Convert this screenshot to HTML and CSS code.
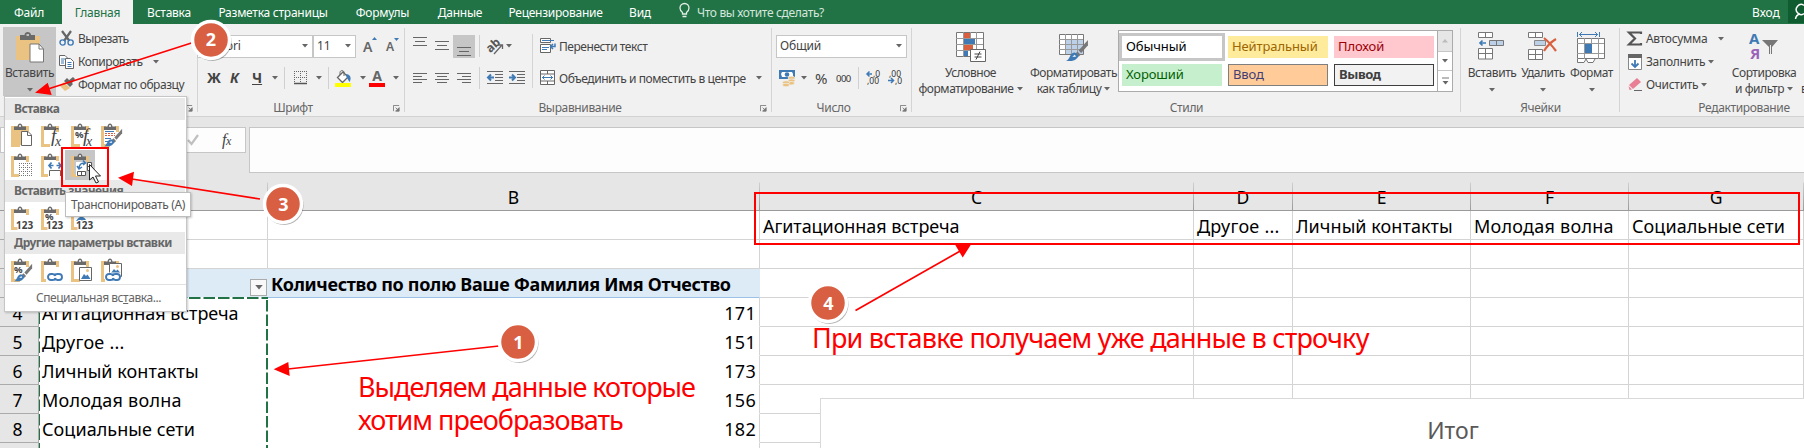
FILE: index.html
```html
<!DOCTYPE html>
<html lang="ru">
<head>
<meta charset="utf-8">
<title>Excel</title>
<link rel="stylesheet" href="styles.css">
</head>
<body>
<svg class="defs" width="0" height="0">
  <symbol id="clip" viewBox="0 0 22 25"><path d="M1.5 4.5H5M14 4.500H17.500M1.500 3V22.500H9" fill="none" stroke="#eac282" stroke-width="3"/><path d="M16.500 3V9" stroke="#eac282" stroke-width="3"/><path d="M3 7V3.500H6.500C7 -.5 11 -.5 11.500 3.500H15V7Z" fill="#6a6a6a"/><path d="M8 3H10" stroke="#fff" stroke-width="1.600"/></symbol>
  <symbol id="launch" viewBox="0 0 8 8"><path d="M.5 7V.5H7" fill="none" stroke="#777"/><path d="M3 3L6 6M7 3V7H3Z" stroke="#777" fill="#777"/></symbol>
  <symbol id="arr" viewBox="0 0 6 4"><path d="M0 0H6L3 3.500Z" fill="#666"/></symbol>
  <symbol id="chain" viewBox="0 0 16 8"><path d="M9.500 5.500C8.500 7 7 7 5.500 7H4C0 7 0 1 4 1H5.500C7 1 8 1.500 8.500 3M6.500 2.500C7.500 1 9 1 10.500 1H12C16 1 16 7 12 7H10.500C9 7 8 6.500 7.500 5" fill="none" stroke="#3f7ab5" stroke-width="1.900"/></symbol>
  <symbol id="brush" viewBox="0 0 22 22"><path d="M21 1L12 11L14.500 13.500L21 6Z" fill="#777"/><path d="M11 12L14 15L12 17L9 14Z" fill="#777"/><path d="M0 21C4 20 3 14 8 13C12 14 13 17 10 19C7 22 3 21 0 21Z" fill="#3f7ab5"/><path d="M6 17L8.500 15L9.500 17Z" fill="#fff"/></symbol>
</svg>

<nav class="tabs">
  <span class="tab file">Файл</span><span class="tab active">Главная</span><span class="tab">Вставка</span><span class="tab">Разметка страницы</span><span class="tab">Формулы</span><span class="tab">Данные</span><span class="tab">Рецензирование</span><span class="tab">Вид</span>
  <svg class="bulb" width="12" height="16"><path d="M3.500 11V9.500C1.500 8 1 6.500 1 5A4.500 4.500 0 0 1 10 5C10 6.500 9.500 8 7.500 9.500V11ZM3.500 13.500H7.500" fill="none" stroke="#e2eee7" stroke-width="1.300"/></svg>
  <span class="ask">Что вы хотите сделать?</span>
  <span class="login">Вход</span>
  <span class="share"><svg width="16" height="23"><path d="M16 5.300A5 5 0 1 0 16 13.700" fill="none" stroke="#fff" stroke-width="1.500"/><path d="M7.500 19C8 15.500 9.500 14.500 12 14" fill="none" stroke="#fff" stroke-width="1.500"/></svg></span>
</nav>

<main class="ribbon">
  <section class="group clipboard">
    <div class="paste">
      <svg width="30" height="32"><path d="M1 4H25V28H1Z" fill="#eac282"/><path d="M5 8V3H9.500C9.500 -1 16 -1 16 3H20V8Z" fill="#6a6a6a"/><path d="M11.500 3H14" stroke="#ddd" stroke-width="1.500"/><path d="M15 12H24L28.500 17V30H15Z" fill="#fff" stroke="#777"/><path d="M24 12V17H28.500" fill="none" stroke="#777"/></svg>
      <span>Вставить</span><svg class="arr"><use href="#arr"/></svg>
    </div>
    <div class="clipcol">
      <div class="cmd"><svg width="16" height="17"><path d="M3 1L10.500 11M12 1L5 11" stroke="#666" stroke-width="2.200"/><circle cx="3.600" cy="12.500" r="2.600" fill="none" stroke="#3f7ab5" stroke-width="1.400"/><circle cx="11.600" cy="12.500" r="2.600" fill="none" stroke="#3f7ab5" stroke-width="1.400"/></svg><span class="t cut">Вырезать</span></div>
      <div class="cmd"><svg width="16" height="16"><g fill="#fff" stroke="#666"><path d="M.5 1.500H6L8.500 4V11.500H.5Z"/><path d="M6.500 4.500H11.500L14.500 7.500V14.500H6.500Z"/></g><path d="M2 5H6M2 7H5M2 9H5M8.500 8.500H12.500M8.500 10.500H12.500M8.500 12.500H12.500" stroke="#3f7ab5"/></svg><span class="t copy">Копировать</span><svg class="arr"><use href="#arr"/></svg></div>
      <div class="cmd"><svg width="16" height="16"><path d="M1 9L5 5L11 11L6 14Z" fill="#eac282"/><path d="M5 4L8 1L14 7L11 10ZM9 4L14 0L16 2L13 6Z" fill="#666"/></svg><span class="t fmt">Формат по образцу</span></div>
    </div>
    <svg class="launch"><use href="#launch"/></svg>
  </section>

  <section class="group font">
    <div class="row r1">
      <span class="box">Calibri<svg class="arr"><use href="#arr"/></svg></span><span class="box size">11<svg class="arr"><use href="#arr"/></svg></span>
      <span class="grow">A<svg width="5" height="4"><path d="M0 3L2.500 0L5 3Z" fill="#3f7ab5"/></svg></span><span class="grow small">A<svg width="5" height="4"><path d="M0 0H5L2.500 3Z" fill="#3f7ab5"/></svg></span>
    </div>
    <div class="row r2">
      <b>Ж</b><b class="it">К</b><b class="un">Ч</b><svg class="arr"><use href="#arr"/></svg><i class="sep"></i>
      <svg width="14" height="14"><path d="M.5 0V12M6.500 0V12M12.500 0V12M0 .5H13M0 6.500H13" stroke="#666" stroke-dasharray="1 1"/><path d="M0 12.500H13" stroke="#555" stroke-width="1.500"/></svg><svg class="arr"><use href="#arr"/></svg><i class="sep"></i>
      <svg width="17" height="17"><path d="M2.500 7.500L8 2L13 7L7.500 12.500Z" fill="#fff" stroke="#666" stroke-width="1.300"/><path d="M5 5V2.500C5 0 9 0 9 2.500V6" fill="none" stroke="#666"/><path d="M11 4C15 4 17 8 14.500 12L12 8Z" fill="#3f7ab5"/><path d="M0 13H16V17H0Z" fill="#ff0"/></svg><svg class="arr"><use href="#arr"/></svg>
      <span class="acolor">A</span><svg class="arr"><use href="#arr"/></svg>
    </div>
    <span class="label">Шрифт</span><svg class="launch"><use href="#launch"/></svg>
  </section>

  <section class="group align">
    <div class="alcol">
      <div class="row r1">
        <svg width="14" height="10"><path d="M0 1.500H14M2 5.500H12M0 9.500H14" transform="translate(0 -1)" stroke="#666"/></svg>
        <svg width="14" height="10"><path d="M0 1.500H14M2 5.500H12M0 9.500H14" transform="translate(0 -1)" stroke="#666"/></svg>
        <span class="sel"><svg width="14" height="10"><path d="M0 1.500H14M2 5.500H12M0 9.500H14" transform="translate(0 -1)" stroke="#666"/></svg></span>
        <i class="sep"></i>
        <svg width="18" height="17"><g transform="rotate(-42 7 9)"><text x="0" y="11" class="ab">ab</text></g><path d="M7 16L15 7M11 7H15.500V11" fill="none" stroke="#666" stroke-width="1.300"/></svg><svg class="arr"><use href="#arr"/></svg>
      </div>
      <div class="row r2">
        <svg width="14" height="11"><path d="M0 .5H14M0 3.500H9M0 6.500H14M0 9.500H9" stroke="#666"/></svg>
        <svg width="14" height="11"><path d="M0 .5H14M2 3.500H12M0 6.500H14M2 9.500H12" stroke="#666"/></svg>
        <svg width="14" height="11"><path d="M0 .5H14M5 3.500H14M0 6.500H14M5 9.500H14" stroke="#666"/></svg>
        <i class="sep"></i>
        <svg width="17" height="14"><path d="M0 .5H16M8 3.500H16M8 6.500H16M8 9.500H16M0 12.500H16" stroke="#666"/><path d="M7 6.500H1M4 3.500L1 6.500L4 9.500" fill="none" stroke="#3f7ab5" stroke-width="2"/></svg>
        <svg width="17" height="14"><path d="M0 .5H16M8 3.500H16M8 6.500H16M8 9.500H16M0 12.500H16" stroke="#666"/><path d="M0 6.500H6M3 3.500L6 6.500L3 9.500" fill="none" stroke="#3f7ab5" stroke-width="2"/></svg>
      </div>
    </div>
    <div class="wrapcol">
      <div class="row r1"><svg width="17" height="16"><path d="M.5 .5H10.500V4.500H.5ZM.5 6.500H10.500V14.500H.5Z" fill="#fff" stroke="#666"/><path d="M2 2.500H14M2 9.500H9M2 11.500H7" stroke="#3f7ab5"/><path d="M15 5.500V8.500H11M13 6L10.500 8.500L13 11" fill="none" stroke="#3f7ab5" stroke-width="1.500"/></svg><span class="t wrap">Перенести текст</span></div>
      <div class="row r2"><svg width="17" height="16"><path d="M.5 .5H14.500V14.500H.5Z" fill="#fff" stroke="#666"/><path d="M.5 4H14.500M.5 11H14.500M7.500 0V4M7.500 11V15" stroke="#666"/><path d="M2 7.500H13M4.500 5.500L2.500 7.500L4.500 9.500M10.500 5.500L12.500 7.500L10.500 9.500" fill="none" stroke="#3f7ab5"/></svg><span class="t merge">Объединить и поместить в центре</span><svg class="arr"><use href="#arr"/></svg></div>
    </div>
    <span class="label">Выравнивание</span><svg class="launch"><use href="#launch"/></svg>
  </section>

  <section class="group number">
    <div class="row r1"><span class="box">Общий<svg class="arr"><use href="#arr"/></svg></span></div>
    <div class="row r2">
      <svg width="17" height="17"><path d="M0 0H16V9H0Z" fill="#3f7ab5"/><path d="M3 2H13L14 4V7H3L2 4Z" fill="#fff"/><circle cx="8" cy="4.500" r="2.300" fill="#3f7ab5"/><g fill="#eac282" stroke="#f0f0f0" stroke-width=".7"><ellipse cx="12.500" cy="8" rx="3.500" ry="1.800"/><ellipse cx="12.500" cy="10.700" rx="3.500" ry="1.800"/><ellipse cx="12" cy="13.200" rx="3.500" ry="1.800"/><ellipse cx="7" cy="12.500" rx="3.500" ry="1.800"/><ellipse cx="7" cy="15" rx="3.500" ry="1.800"/></g></svg><svg class="arr"><use href="#arr"/></svg>
      <span class="pct">%</span><span class="ooo">000</span><i class="sep"></i>
      <svg width="16" height="16" class="dec"><text x="7" y="6.500">,0</text><text x="1" y="14">,00</text><path d="M6 4H1M3.500 1.500L1 4L3.500 6.500" fill="none" stroke="#3f7ab5" stroke-width="1.500"/></svg>
      <svg width="16" height="16" class="dec"><text x="1" y="6.500">,00</text><text x="7" y="14">,0</text><path d="M0 10.500H5.500M3 8L5.500 10.500L3 13" fill="none" stroke="#3f7ab5" stroke-width="1.500"/></svg>
    </div>
    <span class="label">Число</span><svg class="launch"><use href="#launch"/></svg>
  </section>

  <section class="group styles">
    <div class="big cond">
      <svg width="30" height="30"><path d="M.5 .5H27.500V24.500H.5Z" fill="#fff" stroke="#777"/><path d="M8 1H14V6H8ZM8 13H17V18H8Z" fill="#d9603f"/><path d="M8 7H19V12H8ZM8 19H12V24H8Z" fill="#3f7ab5"/><path d="M7.500 0V25M14.500 0V6M20.500 0V25M0 6.500H27M0 12.500H27M0 18.500H27" stroke="#999" fill="none"/><path d="M14.500 17.500H29.500V29.500H14.500Z" fill="#fff" stroke="#666"/><path d="M18.500 22H25.500M18.500 25H25.500M24 19.500L20 27.500" stroke="#444"/></svg>
      <span class="t c1">Условное</span><span class="t c2">форматирование<svg class="arr"><use href="#arr"/></svg></span>
    </div>
    <div class="big ftab">
      <svg width="30" height="30"><path d="M.5 2.500H24.500V22.500H.5Z" fill="#fff" stroke="#777"/><path d="M6 8H24V22H6Z" fill="#bcd0e8"/><path d="M6.500 2V22M12.500 2V22M18.500 2V22M0 7.500H24M0 12.500H24M0 17.500H24" stroke="#999"/><use href="#brush" x="7" y="7" width="23" height="23"/></svg>
      <span class="t c3">Форматировать</span><span class="t c4">как таблицу<svg class="arr"><use href="#arr"/></svg></span>
    </div>
    <div class="gallery">
      <div class="swatches">
        <span class="sw normal">Обычный</span><span class="sw neutral">Нейтральный</span><span class="sw bad">Плохой</span>
        <span class="sw good">Хороший</span><span class="sw input">Ввод</span><span class="sw output">Вывод</span>
      </div>
      <div class="scroller"><span class="off"><svg width="6" height="4"><path d="M0 3.500H6L3 0Z" fill="#bbb"/></svg></span><span><svg class="arr"><use href="#arr"/></svg></span><span><svg width="7" height="8"><path d="M0 1H7" stroke="#777"/><path d="M.5 4H6.500L3.500 7.500Z" fill="#666"/></svg></span></div>
    </div>
    <span class="label">Стили</span>
  </section>

  <section class="group cells">
    <div class="big"><svg width="28" height="30"><path d="M.5 .5H14.500V5.500H.5ZM7.500 .5V5.500M.5 16.500H14.500V27H.5ZM.5 21.500H14.500M7.500 16.500V27" fill="#fff" stroke="#777"/><path d="M11.500 8.500H25.500V13.500H11.500ZM18.500 8.500V13.500" fill="#bcd0e8" stroke="#777"/><path d="M8 11H2M4.500 8.500L2 11L4.500 13.500" fill="none" stroke="#3f7ab5" stroke-width="1.700"/></svg><span class="t ins">Вставить</span><svg class="arr"><use href="#arr"/></svg></div>
    <div class="big"><svg width="30" height="30"><path d="M.5 .5H14.500V5.500H.5ZM7.500 .5V5.500M.5 17.500H14.500V27.500H.5ZM.5 22.500H14.500M7.500 17.500V27.500" fill="#fff" stroke="#777"/><path d="M6.500 8.500H17.500V13.500H6.500Z" fill="#bcd0e8" stroke="#888"/><path d="M16 6C21 10 25 15 28 19M28 7C23 10 19 14 16 19" fill="none" stroke="#d9603f" stroke-width="2.200"/></svg><span class="t del">Удалить</span><svg class="arr"><use href="#arr"/></svg></div>
    <div class="big"><svg width="29" height="31"><path d="M.5 6.500H27.500V26.500H.5Z" fill="#fff" stroke="#777"/><path d="M7.500 6V27M14.500 6V12M21.500 6V27M0 11.500H27M0 21.500H27" stroke="#999"/><path d="M8 12H15V21H8Z" fill="#3f7ab5"/><path d="M.5 0V5M22.500 0V5M2 2.500H21M5 0L2.500 2.500L5 5M18 0L20.500 2.500L18 5" fill="none" stroke="#3f7ab5"/><path d="M.5 27V30.500H7L9 27L11 30.500H16L18 27" fill="#fff" stroke="#777"/></svg><span class="t for">Формат</span><svg class="arr"><use href="#arr"/></svg></div>
    <span class="label">Ячейки</span>
  </section>

  <section class="group editing">
    <div class="clipcol">
      <div class="cmd"><svg width="16" height="16"><path d="M14 3V1.500H2L8 7.500L2 13.500H14V12" fill="none" stroke="#555" stroke-width="2.200"/></svg><span class="t sum">Автосумма</span><svg class="arr a1"><use href="#arr"/></svg></div>
      <div class="cmd"><svg width="16" height="16"><path d="M1.500 1.500H14.500V15.500H1.500Z" fill="#fff" stroke="#888"/><path d="M1 0H15V4H1Z" fill="#666"/><path d="M8 6V13M4.500 9.500L8 13L11.500 9.500" fill="none" stroke="#3f7ab5" stroke-width="1.800"/></svg><span class="t fil">Заполнить</span><svg class="arr a2"><use href="#arr"/></svg></div>
      <div class="cmd"><svg width="16" height="16"><path d="M2 8L10 1L14 5L6 12Z" fill="#e97f94"/><path d="M1.500 9L5 12.500L2.500 13Z" fill="#e97f94"/><path d="M7 13.500H15" stroke="#666"/></svg><span class="t clr">Очистить</span><svg class="arr a3"><use href="#arr"/></svg></div>
    </div>
    <div class="big sort"><svg width="30" height="30"><text x="0" y="12" class="sa">А</text><text x="1" y="27" class="sb">Я</text><path d="M13 8H29L23 15V22H20V15Z" fill="#777"/><path d="M21.500 13V22" stroke="#eee"/></svg><span class="t c5">Сортировка</span><span class="t c6">и фильтр<svg class="arr"><use href="#arr"/></svg></span></div>
    <span class="vcut">в</span>
    <span class="label">Редактирование</span>
  </section>
</main>

<div class="formula">
  <div class="fxbox"><svg width="12" height="12"><path d="M1 6L4.500 10L11 1" fill="none" stroke="#c0c0c0" stroke-width="2.200"/></svg><i class="fx">f<small>x</small></i></div>
  <div class="fin"></div>
</div>

<div class="sheet">
  <div class="line head"><span class="rh"></span><span></span><span>B</span><span>C</span><span>D</span><span>E</span><span>F</span><span>G</span></div>
  <div class="line"><span class="rh"></span><span></span><span></span><span class="w1"><em>Агитационная встреча</em></span><span class="w2"><em>Другое ...</em></span><span class="w3"><em>Личный контакты</em></span><span class="w4"><em>Молодая волна</em></span><span class="w5"><em>Социальные сети</em></span></div>
  <div class="line"><span class="rh"></span><span></span><span></span><span></span><span></span><span></span><span></span><span></span></div>
  <div class="line pivot"><span class="rh"></span><span class="flt"><i><svg class="arr big6"><use href="#arr"/></svg></i></span><span class="ph"><em>Количество по полю Ваше Фамилия Имя Отчество</em></span><span></span><span></span><span></span><span></span><span></span></div>
  <div class="line data"><span class="rh">4</span><span class="w1"><em>Агитационная встреча</em></span><span class="n">171</span><span></span><span></span><span></span><span></span><span></span></div>
  <div class="line data"><span class="rh">5</span><span class="w2"><em>Другое ...</em></span><span class="n">151</span><span></span><span></span><span></span><span></span><span></span></div>
  <div class="line data"><span class="rh">6</span><span class="w3"><em>Личный контакты</em></span><span class="n">173</span><span></span><span></span><span></span><span></span><span></span></div>
  <div class="line data"><span class="rh">7</span><span class="w4"><em>Молодая волна</em></span><span class="n">156</span><span></span><span></span><span></span><span></span><span></span></div>
  <div class="line data"><span class="rh">8</span><span class="w5"><em>Социальные сети</em></span><span class="n">182</span><span></span><span></span><span></span><span></span><span></span></div>
  <div class="line data tail"><span class="rh"></span><span></span><span></span><span></span><span></span><span></span><span></span><span></span></div>
</div>

<div class="chart"><span>Итог</span></div>

<svg class="over ants" width="1804" height="448"><path d="M188 298H268" stroke="#fff" stroke-width="2"/><path d="M189 298H268M267 300V448" stroke="#217346" stroke-width="2" stroke-dasharray="11.500 3"/><path d="M39.500 298V448" stroke="#217346" stroke-dasharray="11.500 3"/></svg>

<div class="menu">
  <div class="mh m1">Вставка</div>
  <div class="icons">
    <svg width="22" height="25"><path d="M0 3H18V22H0Z" fill="#eac282"/><use href="#clip" width="22" height="25"/><path d="M10.500 8.500H17L20.500 12V22.500H10.500Z" fill="#fff" stroke="#666"/><path d="M16.500 8.500V12.500H20.500" fill="none" stroke="#666"/></svg>
    <svg width="22" height="25"><use href="#clip" width="22" height="25"/><text x="10" y="19" class="fi">f</text><text x="14" y="23" class="fi s">x</text></svg>
    <svg width="22" height="25"><use href="#clip" width="22" height="25"/><text x="4" y="15" class="pc">%</text><text x="12" y="19" class="fi">f</text><text x="15" y="23" class="fi s">x</text></svg>
    <svg width="22" height="25"><use href="#clip" width="22" height="25"/><path d="M4 10.500H14M4 12.500H14" stroke="#d9603f" stroke-dasharray="2 1"/><path d="M4 8.500H13M4 15.500H10M4 18.500H8" stroke="#3f7ab5"/><use href="#brush" x="3" y="5" width="19" height="19"/></svg>
  </div>
  <div class="icons">
    <svg width="22" height="25"><use href="#clip" width="22" height="25"/><path d="M8 10H21V24H8Z" fill="#fff"/><path d="M8.500 10V23M12.500 10V23M16.500 10V23M20.500 10V23M8 10.500H21M8 14.500H21M8 18.500H21M8 22.500H21" stroke="#777" stroke-dasharray="1 1"/></svg>
    <svg width="22" height="25"><use href="#clip" width="22" height="25"/><path d="M7 8H22V25H7Z" fill="#fff"/><path d="M12.500 12.500H8M10.500 9.500L8 12.500L10.500 15.500M15.500 12.500H20M17.500 9.500L20 12.500L17.500 15.500" fill="none" stroke="#3f7ab5" stroke-width="1.700"/><path d="M8.500 23V17.500H19.500V23" fill="none" stroke="#666"/></svg>
    <span class="hot"><svg width="22" height="25"><use href="#clip" width="22" height="25"/><path d="M5 9H15V23H5Z" fill="#fff"/><path d="M6.500 18.500H14.500V22.500H6.500ZM10.500 18.500V22.500M16.500 9.500H20.500V17.500H16.500ZM16.500 13.500H20.500" fill="#fff" stroke="#555"/><path d="M8 16C8 12 10 9.500 14 10M6 13L8 16L11 14M12 7.500L14.500 10L12 12" fill="none" stroke="#3f7ab5" stroke-width="1.500"/></svg></span>
  </div>
  <div class="mh m2">Вставить значения</div>
  <div class="icons third">
    <svg width="22" height="25"><use href="#clip" width="22" height="25"/><text x="5" y="23" class="nm">123</text></svg>
    <svg width="22" height="25"><use href="#clip" width="22" height="25"/><text x="4" y="14" class="pc">%</text><text x="5" y="23" class="nm">123</text></svg>
    <svg width="22" height="25"><use href="#clip" width="22" height="25"/><path d="M5 15C8 10 12 9 15 14Z" fill="#3f7ab5"/><text x="5" y="23" class="nm">123</text></svg>
  </div>
  <div class="mh m3">Другие параметры вставки</div>
  <div class="icons fourth">
    <svg width="22" height="25"><use href="#clip" width="22" height="25"/><text x="3" y="15" class="pc">%</text><use href="#brush" x="3" y="5" width="19" height="19"/></svg>
    <svg width="22" height="25"><use href="#clip" width="22" height="25"/><path d="M5 14H22V25H5Z" fill="#fff"/><use href="#chain" x="6" y="15" width="16" height="8"/></svg>
    <svg width="22" height="25"><use href="#clip" width="22" height="25"/><path d="M8.500 9.500H20.500V22.500H8.500Z" fill="#fff" stroke="#666"/><path d="M10 21L13 16L15 18L16.500 16.500L19.500 21Z" fill="#3f7ab5"/><circle cx="16.500" cy="12.500" r="1.500" fill="#eac282"/></svg>
    <svg width="22" height="25"><use href="#clip" width="22" height="25"/><path d="M8.500 5.500H20.500V18.500H8.500Z" fill="#fff" stroke="#666"/><path d="M10 15L13 11L15 13L16.500 11.500L19.500 15Z" fill="#3f7ab5"/><circle cx="16.500" cy="8.500" r="1.500" fill="#eac282"/><path d="M4 14.500H19V24H4Z" fill="#fff"/><use href="#chain" x="4" y="15" width="16" height="8"/></svg>
  </div>
  <div class="special">Специальная вс<u>т</u>авка...</div>
</div>
<div class="tip">Транспонировать (A)</div>

<svg class="over" width="1804" height="448">
  <g fill="none" stroke="#f00" stroke-width="2"><path d="M62 148H108V186H62Z"/><path d="M755 193H1799V244H755Z"/></g>
  <path d="M89.500 164.500V180L93 177L96 183L98.500 182L95.500 176H100.500Z" fill="#fff" stroke="#222"/>
  <g stroke="#f00" stroke-width="1.700"><path d="M48 89L193 42.500M132 179L260 199M288 369L499 346M962 250L855.500 310.500"/></g>
  <path d="M35 92.700L47.700 82.700L51.700 95ZM118 177.700L134 171.700L132 186ZM273.700 369.300L288.300 362L289.700 376ZM955 244.500H971L962.700 257.500Z" fill="#f00"/>
  <g class="badge"><circle cx="212" cy="41.500" r="19.500" class="sh"/><circle cx="211" cy="40" r="18.500"/><text x="211" y="46">2</text></g>
  <g class="badge"><circle cx="284" cy="205.500" r="19.500" class="sh"/><circle cx="283" cy="204" r="18.500"/><text x="283.500" y="210.500">3</text></g>
  <g class="badge"><circle cx="519" cy="343.500" r="19.500" class="sh"/><circle cx="518" cy="342" r="18.500"/><text x="518.500" y="348.500">1</text></g>
  <g class="badge"><circle cx="829" cy="304.500" r="19.500" class="sh"/><circle cx="828" cy="303" r="18.500"/><text x="828.500" y="309.500">4</text></g>
</svg>
<div class="note one">Выделяем данные которые<br>хотим преобразовать</div>
<div class="note two">При вставке получаем уже данные в строчку</div>
</body>
</html>
```
FILE: styles.css
```css
* { box-sizing: border-box; }
html { overflow: hidden; height: 448px; }
body { margin: 0; width: 1804px; height: 448px; overflow: hidden; position: relative; background: #fff; color: #444; font: 12px/16px "Noto Sans", "Open Sans", sans-serif; white-space: nowrap; }
svg { display: block; flex: none; overflow: visible; }
.defs { position: absolute; }
.arr { width: 6px; height: 4px; }
.big6 { width: 8px; height: 5px; }
em { font-style: normal; }

.tabs { display: grid; grid-template-columns: 62px 71px 72px 136px 83px 72px 119px 50px 14px 18px 1055px 36px 16px; height: 24px; background: #217346; color: #fff; }
.tab { text-align: center; line-height: 25px; letter-spacing: -.25px; }
.tab.file { text-align: left; padding-left: 14px; line-height: 26px; }
.tab.active { background: #f1f1f1; color: #217346; }
.bulb { grid-column: 10; margin-top: 3px; }
.ask { color: #d5e6dc; line-height: 25px; letter-spacing: -.35px; }
.login { line-height: 25px; }
.share { background: #0e5c2f; height: 23px; overflow: hidden; }

.ribbon { display: flex; height: 93px; background: #f1f1f1; border-bottom: 1px solid #d2d2d2; }
.group { position: relative; height: 92px; flex: none; display: flex; }
.group::after { content: ""; position: absolute; right: 0; top: 4px; width: 1px; height: 84px; background: #d4d4d4; }
.label { position: absolute; left: 0; right: 0; bottom: 0; text-align: center; color: #666; line-height: 16px; letter-spacing: -.35px; }
.font .label, .align .label, .number .label { right: 17px; }
.launch { position: absolute; right: 5px; bottom: 4px; width: 7px; height: 7px; }
.clipboard { width: 198px; }
.font { width: 207px; flex-direction: column; }
.align { width: 367px; }
.number { width: 140px; flex-direction: column; }
.styles { width: 549px; }
.cells { width: 159px; }
.editing { width: 184px; }
.editing::after { display: none; }

.paste { width: 53px; height: 69px; margin: 3px 0 0 3px; background: #c6c6c6; display: flex; flex-direction: column; align-items: center; padding-top: 5px; }
.paste span { margin-top: 1px; letter-spacing: -.4px; }
.paste .arr { margin-top: 7px; }
.clipcol { display: flex; flex-direction: column; padding: 3px 0 0 3px; }
.cmd { display: flex; align-items: center; height: 23px; gap: 3px; }
.cmd .arr { margin-left: 8px; }
.t { display: flex; align-items: center; gap: 3px; letter-spacing: -.45px; }
.t.cut { letter-spacing: -.6px; }
.editing .cmd .t { letter-spacing: -.3px; }

.row { display: grid; align-items: center; justify-items: start; }
.r1 { height: 24px; margin-top: 10px; }
.r2 { height: 24px; margin-top: 8px; }
.box { background: #fff; border: 1px solid #c6c6c6; height: 23px; width: 100%; display: flex; align-items: center; justify-content: space-between; padding: 0 4px 0 3px; letter-spacing: -.2px; }
.font .r1 { grid-template-columns: 116px 43px 7px 23px 20px; margin-left: -1px; }
.font .r1 .box:first-child { padding-left: 8px; }
.grow { grid-column: 4; font: 600 14px "Noto Sans"; display: flex; color: #666; }
.grow.small { grid-column: 5; font-size: 12px; }
.font .r2 { grid-template-columns: 23px 22px 20px 12px 10px 22px 12px 7px 25px 9px 24px 10px; margin-left: 9px; }
.font b { font-size: 14px; }
.it { font-style: italic; }
.un { text-decoration: underline; }
.sep { width: 1px; height: 22px; background: #d0d0d0; }
.acolor { font: bold 14px/14px "Noto Sans"; width: 16px; text-align: center; border-bottom: 4px solid #f00; color: #666; }

.alcol { width: 128px; border-right: 1px solid #d4d4d4; margin: 10px 0 0; height: 54px; padding-left: 8px; }
.alcol .r1, .wrapcol .r1 { margin-top: 0; }
.alcol .r1 { grid-template-columns: 22px 18px 26px 8px 19px 10px; }
.alcol .r1 > svg:first-child { margin-top: -8px; }
.sel { background: #c6c6c6; width: 22px; height: 23px; padding: 12px 0 0 4px; }
.alcol .r2 { grid-template-columns: 22px 22px 22px 8px 22px 17px; }
.wrapcol { padding: 10px 0 0 7px; }
.wrapcol .row { grid-template-columns: 19px 197px 8px; }
.wrap, .merge { padding-top: 1px; }
.ab { font: bold 12px "Noto Sans"; fill: #555; }

.number .r1 { margin-left: 4px; grid-template-columns: 131px; }
.number .r2 { margin-left: 7px; grid-template-columns: 22px 14px 21px 22px 8px 22px 16px; }
.pct { font-size: 15px; }
.ooo { font: 9.500px "Noto Sans"; letter-spacing: -.5px; color: #333; }
.dec text { font: 8.500px "Noto Sans"; fill: #333; }

.big { display: flex; flex-direction: column; align-items: center; padding-top: 8px; }
.big > svg:first-child { height: 30px; margin-bottom: 3px; }
.big > .arr { margin-top: 7px; }
.cond { width: 117px; }
.ftab { width: 89px; }
.gallery { display: flex; margin-top: 6px; width: 335px; height: 62px; border: 1px solid #ababab; background: #fff; }
.swatches { display: grid; grid-template-columns: repeat(3, 106px); grid-template-rows: 28px 28px; width: 319px; padding-top: 2px; }
.sw { margin: 3px; padding-left: 4px; line-height: 21px; font-size: 13px; width: 100px; height: 22px; letter-spacing: -.1px; }
.normal { margin: 0; border: 3px solid #c6c6c6; width: 106px; height: 28px; color: #000; }
.neutral { background: #ffeb9c; color: #9c6500; }
.bad { background: #ffc7ce; color: #9c0006; }
.good { background: #c6efce; color: #006100; }
.input { background: #fc9; color: #3f3f76; border: 1px solid #7f7f7f; line-height: 19px; }
.output { background: #f2f2f2; color: #3f3f3f; border: 1px solid #3f3f3f; font-weight: bold; line-height: 19px; letter-spacing: -.4px; }
.scroller { width: 15px; border-left: 1px solid #ababab; display: grid; grid-template-rows: 21px 19px 20px; }
.scroller span { display: grid; place-items: center; border-bottom: 1px solid #c6c6c6; }
.scroller span:last-child { border: 0; }
.scroller .off { background: #e6e6e6; }
.cells { display: grid; grid-template-columns: 52px 50px 47px; padding-left: 5px; }
.editing .clipcol { padding-left: 7px; width: 110px; }
.editing .cmd .arr { margin-left: 0; }
.editing .cmd .a1 { margin-left: 8px; }
.sort { width: 68px; }
.sa { font: bold 15px "Noto Sans"; fill: #3f7ab5; }
.sb { font: bold 15px "Noto Sans"; fill: #9b62b8; }
.vcut { margin: 57px 0 0 3px; width: 3px; overflow: hidden; }
.editing .label { left: 64px; }

.formula { height: 56px; background: #e6e6e6; padding-top: 10px; display: flex; gap: 3px; }
.fxbox { width: 246px; height: 26px; background: #fdfdfd; border: 1px solid #c6c6c6; display: flex; align-items: center; padding-left: 186px; gap: 23px; }
.fx { font: italic 16px "Liberation Serif"; color: #444; letter-spacing: -.5px; }
.fx small { font-size: 12px; }
.fin { width: 1555px; height: 46px; background: #fdfdfd; border: 1px solid #c6c6c6; border-right: 0; }

.sheet { font-size: 18px; color: #000; }
.line { display: grid; grid-template-columns: 39px 229px 492px 434px 99px 178px 158px 175px; height: 29px; }
.line > span { border-right: 1px solid #d4d4d4; border-bottom: 1px solid #d4d4d4; padding: 0 3px; line-height: 31px; overflow: hidden; }
.line .rh { background: #e6e6e6; text-align: center; border-color: #ababab; padding: 0 3px 0 0; font-size: 17.500px; line-height: 30px; }
.line.tail { height: 5px; }
.line.tail > span { border-bottom: 0; }
.w1 em { letter-spacing: -.06px; }
.w2 em { letter-spacing: .25px; }
.w3 em { letter-spacing: .06px; }
.w4 em { letter-spacing: .25px; }
.w5 em { letter-spacing: .06px; }
.head { height: 38px; background: #e6e6e6; }
.head > span { border-bottom: 1px solid #999; border-image: linear-gradient(#e6e6e6 26%, #cfcfcf 28%, #999) 1; border-width: 0 1px 1px 0; text-align: center; padding-top: 9px; line-height: 30px; font-size: 17.500px; }
.pivot .flt, .pivot .ph { background: #ddebf7; border-bottom-color: #9bc2e6; border-right-color: #ddebf7; }
.ph { font-weight: bold; letter-spacing: -.32px; }
.flt { display: flex; justify-content: flex-end; align-items: flex-end; padding: 0 0 1px !important; }
.flt i { width: 17px; height: 17px; border: 1px solid #ababab; background: #f8f8f8; display: grid; place-items: center; }
.data > span:nth-child(2) { border-bottom-color: #fff; border-right: 0; }
.data > span:nth-child(3) { border-bottom-color: #fff; }
.data .n { text-align: right; letter-spacing: .3px; }
.chart { position: absolute; left: 820px; top: 398px; width: 984px; height: 50px; background: #fff; border: 1px solid #d9d9d9; border-width: 1px 0 0 1px; padding-left: 281px; }
.chart span { display: block; width: 702px; text-align: center; font-size: 23px; line-height: 32px; padding-top: 15px; color: #595959; }

.over { position: absolute; left: 0; top: 0; }
.menu { position: absolute; left: 4px; top: 96px; width: 183px; height: 216px; background: #fff; border: 1px solid #c6c6c6; box-shadow: 1px 1px 2px rgba(0,0,0,.2); }
.mh { background: #e9e9e9; font-weight: bold; color: #666; height: 22px; line-height: 22px; padding-left: 9px; margin-right: 1px; letter-spacing: -.52px; }
.m1 { margin-top: 1px; }
.icons { display: grid; grid-template-columns: repeat(4, 30px); padding: 3px 0 0 6px; height: 30px; }
.hot { background: #c6c6c6; width: 30px; height: 30px; margin: -3px 0 0 -6px; padding: 3px 0 0 6px; }
.icons.third { padding-top: 4px; }
.icons.fourth { padding-top: 4px; height: 31px; border-bottom: 1px solid #e1e1e1; }
.special { text-align: center; color: #666; line-height: 25px; letter-spacing: -.45px; padding-left: 6px; }
.fi { font: italic 19px "Liberation Serif"; fill: #444; }
.fi.s { font-size: 14px; }
.pc { font: bold 9.500px "Noto Sans"; fill: #444; }
.nm { font: bold 10px "Noto Sans"; fill: #444; paint-order: stroke; stroke: #fff; stroke-width: 2px; }
.tip { position: absolute; left: 65px; top: 192px; width: 126px; height: 25px; background: #fff; border: 1px solid #bebebe; box-shadow: 1px 1px 2px rgba(0,0,0,.2); color: #575757; line-height: 23px; padding-left: 5px; letter-spacing: -.35px; }
.badge circle { fill: #d95f43; stroke: #fff; stroke-width: 3.500px; }
.badge .sh { fill: rgba(0,0,0,.3); stroke: none; }
.badge text { font: bold 18px "Noto Sans"; fill: #fff; text-anchor: middle; }
.note { position: absolute; color: #f00; font: 27px/33px "Noto Sans", sans-serif; }
.one { left: 358px; top: 370px; letter-spacing: -1px; }
.two { left: 812px; top: 321px; letter-spacing: -.8px; }
```
